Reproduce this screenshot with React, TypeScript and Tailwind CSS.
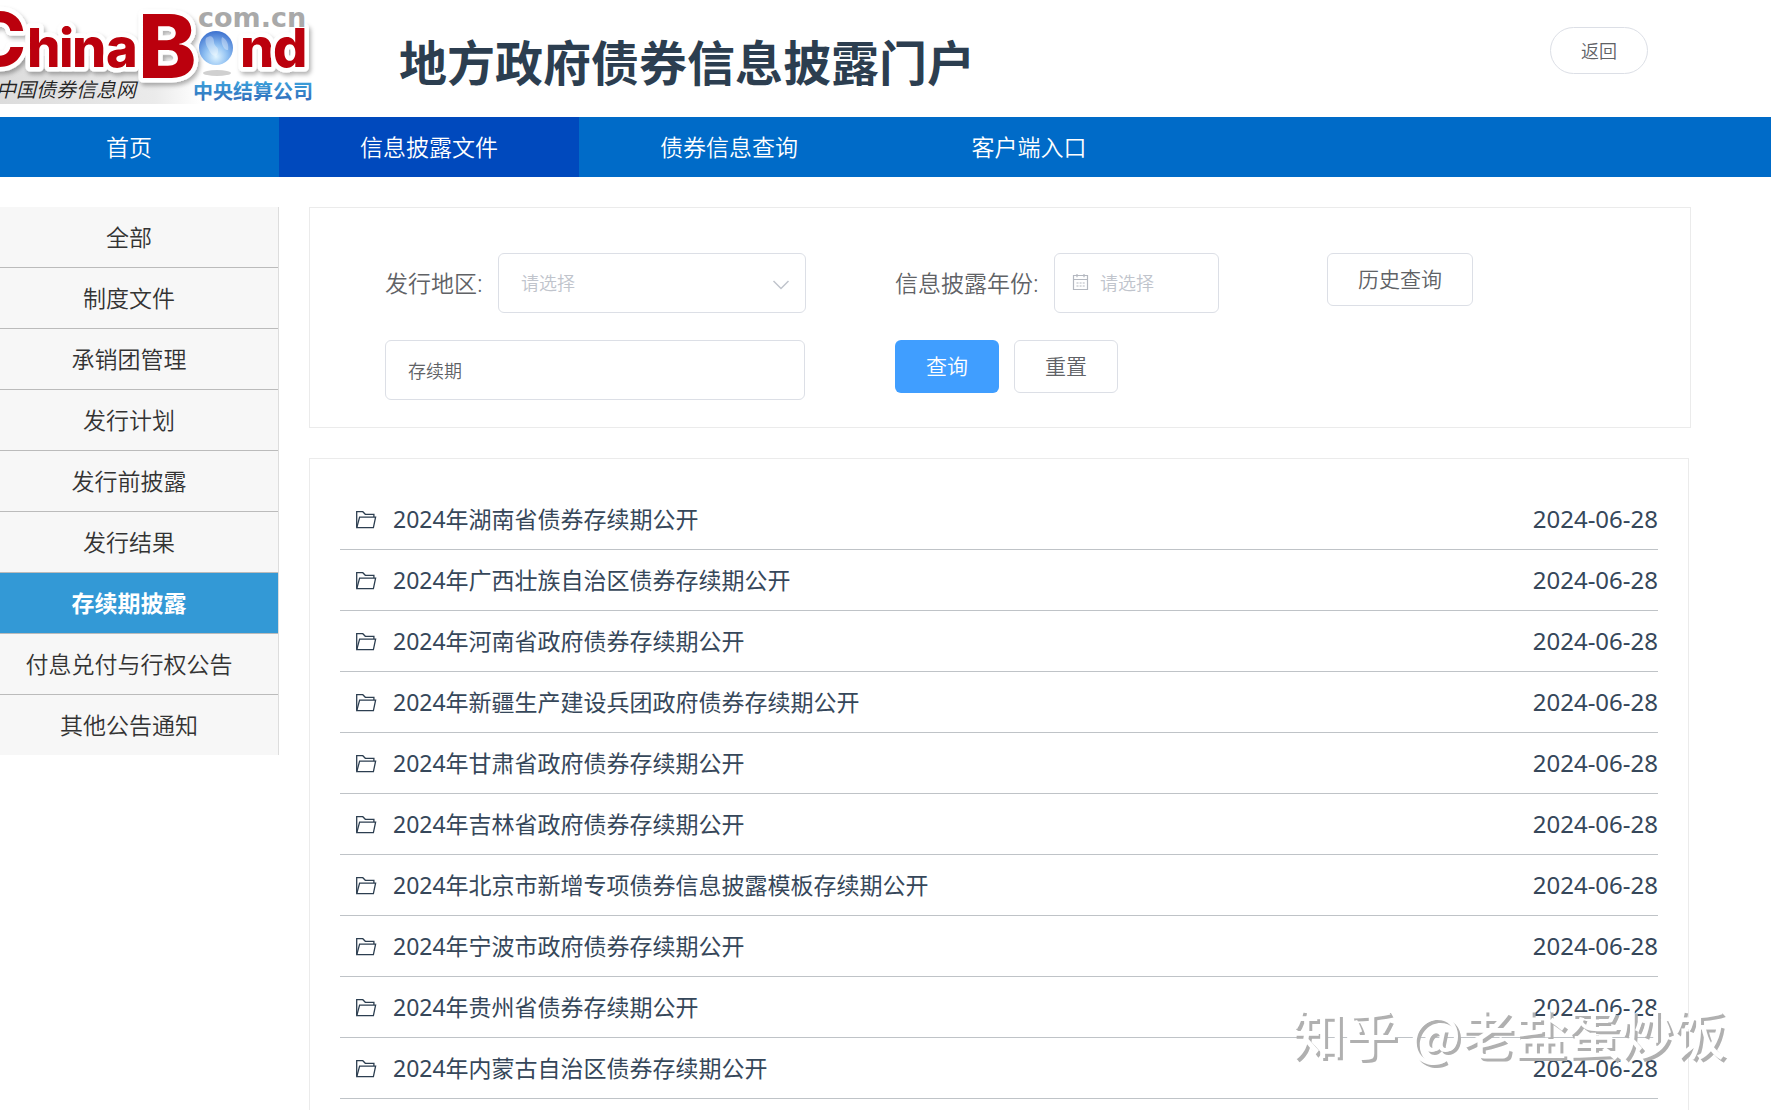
const navItems = ["首页", "信息披露文件", "债券信息查询", "客户端入口"];

const categories = [
  "全部",
  "制度文件",
  "承销团管理",
  "发行计划",
  "发行前披露",
  "发行结果",
  "存续期披露",
  "付息兑付与行权公告",
  "其他公告通知",
];

const files = [
  { title: "2024年湖南省债券存续期公开", date: "2024-06-28" },
  { title: "2024年广西壮族自治区债券存续期公开", date: "2024-06-28" },
  { title: "2024年河南省政府债券存续期公开", date: "2024-06-28" },
  { title: "2024年新疆生产建设兵团政府债券存续期公开", date: "2024-06-28" },
  { title: "2024年甘肃省政府债券存续期公开", date: "2024-06-28" },
  { title: "2024年吉林省政府债券存续期公开", date: "2024-06-28" },
  { title: "2024年北京市新增专项债券信息披露模板存续期公开", date: "2024-06-28" },
  { title: "2024年宁波市政府债券存续期公开", date: "2024-06-28" },
  { title: "2024年贵州省债券存续期公开", date: "2024-06-28" },
  { title: "2024年内蒙古自治区债券存续期公开", date: "2024-06-28" },
];

function Logo() {
  return (
    <svg width="316" height="104" viewBox="0 0 316 104" role="img" aria-label="ChinaBond 中国债券信息网" className="shrink-0">
      <defs>
        <linearGradient id="plate" x1="0" y1="0" x2="1" y2="0">
          <stop offset="0" stopColor="#dcdcdc" />
          <stop offset="0.5" stopColor="#ebebeb" />
          <stop offset="0.65" stopColor="#ffffff" />
        </linearGradient>
        <linearGradient id="company" x1="0" y1="0" x2="0" y2="1">
          <stop offset="0" stopColor="#3fb0e4" />
          <stop offset="1" stopColor="#2f62b4" />
        </linearGradient>
        <radialGradient id="globe" cx="0.5" cy="0.75" r="0.75">
          <stop offset="0" stopColor="#e2f5ff" />
          <stop offset="0.45" stopColor="#8fc0f2" />
          <stop offset="1" stopColor="#3b6fce" />
        </radialGradient>
        <filter id="soft" x="-10%" y="-10%" width="120%" height="130%">
          <feDropShadow dx="2" dy="3" stdDeviation="2" floodColor="#000000" floodOpacity="0.3" />
        </filter>
      </defs>
      <rect x="0" y="56" width="310" height="48" fill="url(#plate)" />
      <g
        filter="url(#soft)"
        fill="#bb0008"
        stroke="#ffffff"
        strokeWidth="9"
        strokeLinejoin="round"
        fontFamily="Inter, sans-serif"
        fontWeight="800"
        style={{ paintOrder: "stroke" }}
      >
        <text x="-29" y="66" fontSize="74">C</text>
        <text x="27 59 72 106" y="67" fontSize="54">hina</text>
        <text x="138" y="78" fontSize="88">B</text>
        <text x="240 273" y="67" fontSize="54">nd</text>
      </g>
      <ellipse cx="217" cy="73" rx="14" ry="3" fill="#d0d0d0" />
      <circle cx="216" cy="48" r="17" fill="url(#globe)" />
      <path d="M206 38c5-4 8-1 8 4s5 4 4 10-6 4-8 0-6-9-4-14zM222 37c5 2 7 8 6 13-4 1-8-8-6-13z" fill="#ffffff" opacity="0.35" />
      <text x="198" y="27" fontSize="27" fontFamily="'DejaVu Sans', sans-serif" fontWeight="700" fill="#a9a9a9">com.cn</text>
      <text x="-4" y="97" fontSize="20" fontFamily="'Noto Sans CJK SC', sans-serif" fontStyle="italic" fill="#222222">中国债券信息网</text>
      <text x="193" y="99" fontSize="20" fontFamily="'Noto Sans CJK SC', sans-serif" fontWeight="700" fill="url(#company)">中央结算公司</text>
    </svg>
  );
}

function FolderIcon() {
  return (
    <svg width="22" height="22" viewBox="0 0 22 22" fill="none" stroke="#2c3e50" strokeWidth="1.3" aria-hidden="true" className="shrink-0">
      <path d="M1.7 19.6V3.7h6.1l2.5 2.6h8.6v2.8" />
      <path d="M1.8 19.6 4.6 9.2h16l-2.2 10.4H1.8z" />
    </svg>
  );
}

function CalendarIcon() {
  return (
    <svg width="18" height="18" viewBox="0 0 18 18" fill="none" stroke="#b4b8c0" strokeWidth="1.2" aria-hidden="true" className="shrink-0">
      <path d="M1.5 1.5h14v14h-14zM1.5 5.5h14M5 0v3.2M12 0v3.2" />
      <path d="M4.5 9h2M7.6 9h2M10.7 9h2M4.5 12h2M7.6 12h2M10.7 12h2" />
    </svg>
  );
}

function SearchPanel() {
  return (
    <form className="grid grid-cols-[85fr_72fr_48fr] gap-y-[27px] border border-[#ebebeb] px-[75px] pt-[45px] pb-[27px]">
      <div className="flex items-center">
        <label htmlFor="region" className="w-[113px] shrink-0 text-[23px] text-[#606266]">
          发行地区:
        </label>
        <div className="relative w-[308px]">
          <select
            id="region"
            defaultValue=""
            className="h-[60px] w-full appearance-none rounded-md border border-[#dcdfe6] bg-white px-[22px] text-lg text-[#c0c4cc]"
          >
            <option value="">请选择</option>
          </select>
          <svg width="18" height="10" viewBox="0 0 18 10" fill="none" stroke="#c0c4cc" strokeWidth="1.5" aria-hidden="true" className="pointer-events-none absolute top-[27px] right-4">
            <path d="M1.5 1l7.5 7.5L16.5 1" />
          </svg>
        </div>
      </div>

      <div className="flex items-center">
        <label htmlFor="year" className="w-[159px] shrink-0 text-[23px] text-[#606266]">
          信息披露年份:
        </label>
        <div className="flex h-[60px] w-[165px] items-center gap-[10px] rounded-md border border-[#dcdfe6] pl-[17px]">
          <CalendarIcon />
          <input id="year" type="text" placeholder="请选择" className="w-full min-w-0 text-lg text-[#606266] outline-none placeholder:text-[#c0c4cc]" />
        </div>
      </div>

      <div>
        <button type="button" className="h-[53px] w-[146px] rounded-md border border-[#dcdfe6] text-[21px] text-[#606266]">
          历史查询
        </button>
      </div>

      <input
        type="text"
        aria-label="关键字"
        defaultValue="存续期"
        className="h-[60px] w-[420px] rounded-md border border-[#dcdfe6] px-[22px] text-lg text-[#606266]"
      />

      <div className="flex items-start gap-[15px]">
        <button type="button" className="h-[53px] w-[104px] rounded-md bg-[#409eff] text-[21px] text-white">
          查询
        </button>
        <button type="button" className="h-[53px] w-[104px] rounded-md border border-[#dcdfe6] text-[21px] text-[#606266]">
          重置
        </button>
      </div>
    </form>
  );
}

function FileList() {
  return (
    <section className="mt-[30px] mr-[2px] flex-1 border border-b-0 border-[#ebebeb] px-[30px] pt-[30px] font-normal">
      <ul>
        {files.map((file) => (
          <li key={file.title} className="flex h-[61px] items-center justify-between border-b border-[#bfc3c7] pl-[15px] text-[#36475a]">
            <a href="#" className="flex items-center gap-4 text-[23px]">
              <FolderIcon />
              {file.title}
            </a>
            <time className="text-2xl">{file.date}</time>
          </li>
        ))}
      </ul>
    </section>
  );
}

export default function App() {
  return (
    <div className="relative flex min-h-screen flex-col overflow-hidden bg-white font-['Noto_Sans','Noto_Sans_CJK_SC',sans-serif] font-[350]">
      <header className="flex h-[117px] items-start pr-[123px]">
        <Logo />
        <h1 className="ml-[83px] pt-[27px] text-5xl leading-[72px] font-bold text-[#2c3e50]">地方政府债券信息披露门户</h1>
        <button type="button" className="mt-[27px] ml-auto h-[47px] w-[98px] rounded-full border border-[#dcdfe6] text-lg text-[#606266]">
          返回
        </button>
      </header>

      <nav className="flex h-[60px] bg-[#006bc8] text-[23px] text-white">
        {navItems.map((item, index) => (
          <a
            key={item}
            href="#"
            className={`flex items-center justify-center ${index === 0 ? "w-[279px] pr-[21px]" : "w-[300px]"} ${
              index === 1 ? "bg-[#0049bd]" : ""
            }`}
          >
            {item}
          </a>
        ))}
      </nav>

      <main className="flex flex-1 gap-[30px] pt-[30px] pr-20">
        <aside className="w-[279px] shrink-0">
          <ul className="border-r border-[#dddddd]">
            {categories.map((name) => (
              <li key={name} className="border-b border-[#bbbbbb] last:border-b-0">
                <a
                  href="#"
                  className={`flex h-[60px] items-center justify-center pr-[20px] text-[23px] ${
                    name === "存续期披露" ? "bg-[#3399d6] font-bold text-white" : "bg-[#f7f7f7] text-[#333333]"
                  }`}
                >
                  {name}
                </a>
              </li>
            ))}
          </ul>
        </aside>

        <div className="flex min-w-0 flex-1 flex-col">
          <SearchPanel />
          <FileList />
        </div>
      </main>

      <p className="pointer-events-none absolute right-[45px] bottom-[38px] text-[53px] leading-[80px] font-medium text-white [text-shadow:3px_3px_0_#b0b0b0] font-['Noto_Sans_CJK_SC',sans-serif]">
        知乎 @老盐蛋炒饭
      </p>
    </div>
  );
}
